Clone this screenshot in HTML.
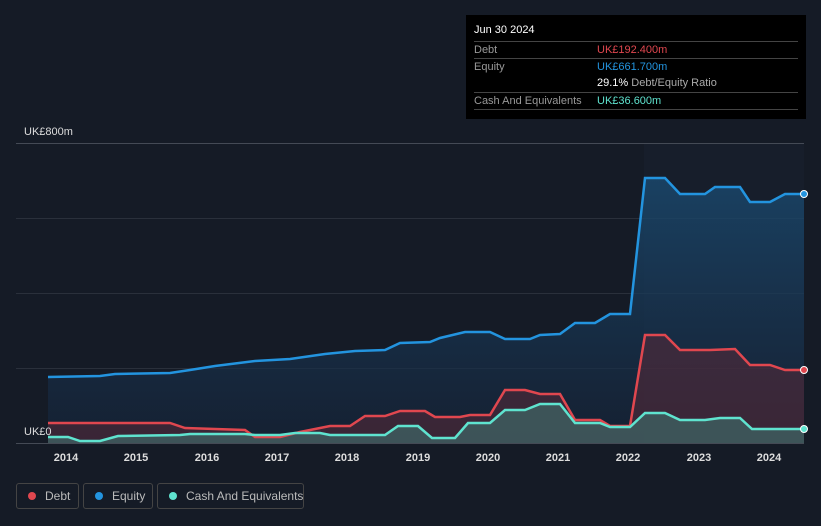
<!DOCTYPE html>
<html><head><meta charset="utf-8"><style>
body{margin:0;width:821px;height:526px;background:#151b26;font-family:"Liberation Sans",sans-serif;overflow:hidden;position:relative}
.tt{position:absolute;left:466px;top:15px;width:340px;height:104px;background:#000;color:#fff;font-size:11px}
.tt .r{position:absolute;left:8px;right:8px;border-top:1px solid #444;height:17px;line-height:17px}
.lab{color:#999}
.v{position:absolute;left:123px;top:0}
.leg{position:absolute;top:483px;height:26px;border:1px solid #444;border-radius:3px;color:#bbb;font-size:12px;line-height:24px;box-sizing:border-box;white-space:nowrap}
.dot{display:inline-block;width:8px;height:8px;border-radius:50%;margin:0 9px 0 11px;vertical-align:0px}
</style></head><body>
<svg width="821" height="526" style="position:absolute;left:0;top:0">
<defs>
<linearGradient id="ge" x1="0" y1="0" x2="0" y2="1"><stop offset="0" stop-color="#1a4a70" stop-opacity=".8"/><stop offset="1" stop-color="#15243a" stop-opacity=".6"/></linearGradient>
</defs>
<rect x="644" y="143" width="160" height="300" fill="#1a2230" opacity=".5"/>
<g stroke="#2a303b" stroke-width="1">
<line x1="16" y1="143.5" x2="804" y2="143.5" stroke="#444a55"/>
<line x1="16" y1="218.5" x2="804" y2="218.5"/>
<line x1="16" y1="293.5" x2="804" y2="293.5"/>
<line x1="16" y1="368.5" x2="804" y2="368.5"/>
</g>
<path d="M48,377 L100,376 L115,374 L170,373 L190,370 L215,366 L255,361 L290,359 L325,354 L355,351 L385,350 L400,343 L430,342 L440,338 L465,332 L490,332 L505,339 L530,339 L540,335 L560,334 L575,323 L595,323 L610,314 L630,314 L645,178 L665,178 L680,194 L705,194 L715,187 L740,187 L750,202 L770,202 L785,194 L804,194 L804,443 L48,443Z" fill="url(#ge)"/>
<path d="M48,423 L100,423 L170,423 L185,428 L245,430 L255,437 L280,437 L300,432 L330,426 L350,426 L365,416 L385,416 L400,411 L425,411 L435,417 L460,417 L470,415 L490,415 L505,390 L525,390 L540,394 L560,394 L575,420 L600,420 L610,426 L630,426 L645,335 L665,335 L680,350 L710,350 L735,349 L750,365 L770,365 L785,370 L804,370 L804,443 L48,443Z" fill="#5a2a38" opacity=".55"/>
<path d="M48,437 L68,437 L80,441 L100,441 L118,436 L180,435 L190,434 L245,434 L255,435 L280,435 L295,433 L320,433 L330,435 L385,435 L398,426 L418,426 L432,438 L455,438 L468,423 L490,423 L505,410 L525,410 L540,404 L560,404 L575,423 L600,423 L610,427 L630,427 L645,413 L665,413 L680,420 L705,420 L720,418 L740,418 L752,429 L804,429 L804,443 L48,443Z" fill="#3f7a74" opacity=".55"/>
<path d="M48,377 L100,376 L115,374 L170,373 L190,370 L215,366 L255,361 L290,359 L325,354 L355,351 L385,350 L400,343 L430,342 L440,338 L465,332 L490,332 L505,339 L530,339 L540,335 L560,334 L575,323 L595,323 L610,314 L630,314 L645,178 L665,178 L680,194 L705,194 L715,187 L740,187 L750,202 L770,202 L785,194 L804,194" fill="none" stroke="#2394df" stroke-width="2.5"/>
<path d="M48,423 L100,423 L170,423 L185,428 L245,430 L255,437 L280,437 L300,432 L330,426 L350,426 L365,416 L385,416 L400,411 L425,411 L435,417 L460,417 L470,415 L490,415 L505,390 L525,390 L540,394 L560,394 L575,420 L600,420 L610,426 L630,426 L645,335 L665,335 L680,350 L710,350 L735,349 L750,365 L770,365 L785,370 L804,370" fill="none" stroke="#e0474f" stroke-width="2.5"/>
<path d="M48,437 L68,437 L80,441 L100,441 L118,436 L180,435 L190,434 L245,434 L255,435 L280,435 L295,433 L320,433 L330,435 L385,435 L398,426 L418,426 L432,438 L455,438 L468,423 L490,423 L505,410 L525,410 L540,404 L560,404 L575,423 L600,423 L610,427 L630,427 L645,413 L665,413 L680,420 L705,420 L720,418 L740,418 L752,429 L804,429" fill="none" stroke="#5fe3cf" stroke-width="2.5"/>
<line x1="16" y1="443.5" x2="804" y2="443.5" stroke="#444a55"/>
<circle cx="804" cy="194" r="3.5" fill="#2394df" stroke="#fff" stroke-width="1"/>
<circle cx="804" cy="370" r="3.5" fill="#e0474f" stroke="#fff" stroke-width="1"/>
<circle cx="804" cy="429" r="3.5" fill="#5fe3cf" stroke="#fff" stroke-width="1"/>
<g fill="#ddd" font-size="11" font-weight="bold" text-anchor="middle" font-family="Liberation Sans">
<text x="66" y="461">2014</text><text x="136" y="461">2015</text><text x="207" y="461">2016</text><text x="277" y="461">2017</text><text x="347" y="461">2018</text><text x="418" y="461">2019</text><text x="488" y="461">2020</text><text x="558" y="461">2021</text><text x="628" y="461">2022</text><text x="699" y="461">2023</text><text x="769" y="461">2024</text>
</g>
<text x="24" y="135" fill="#ddd" font-size="11">UK£800m</text>
<text x="24" y="435" fill="#ddd" font-size="11">UK£0</text>
</svg>
<div class="tt">
<div style="position:absolute;left:8px;top:9px;font-size:11px">Jun 30 2024</div>
<div class="r" style="top:26px"><span class="lab">Debt</span><span class="v" style="color:#e0474f">UK£192.400m</span></div>
<div class="r" style="top:43px"><span class="lab">Equity</span><span class="v" style="color:#2394df">UK£661.700m</span></div>
<div class="r" style="top:60px;border-top:none"><span class="v"><b style="font-weight:normal;color:#fff">29.1%</b> <span class="lab" style="color:#aaa">Debt/Equity Ratio</span></span></div>
<div class="r" style="top:77px"><span class="lab">Cash And Equivalents</span><span class="v" style="color:#5fe3cf">UK£36.600m</span></div>
<div class="r" style="top:94px;height:0"></div>
</div>
<div class="leg" style="left:16px;width:63px"><span class="dot" style="background:#e0474f"></span>Debt</div>
<div class="leg" style="left:83px;width:70px"><span class="dot" style="background:#2394df"></span>Equity</div>
<div class="leg" style="left:157px;width:147px"><span class="dot" style="background:#5fe3cf"></span>Cash And Equivalents</div>
</body></html>
